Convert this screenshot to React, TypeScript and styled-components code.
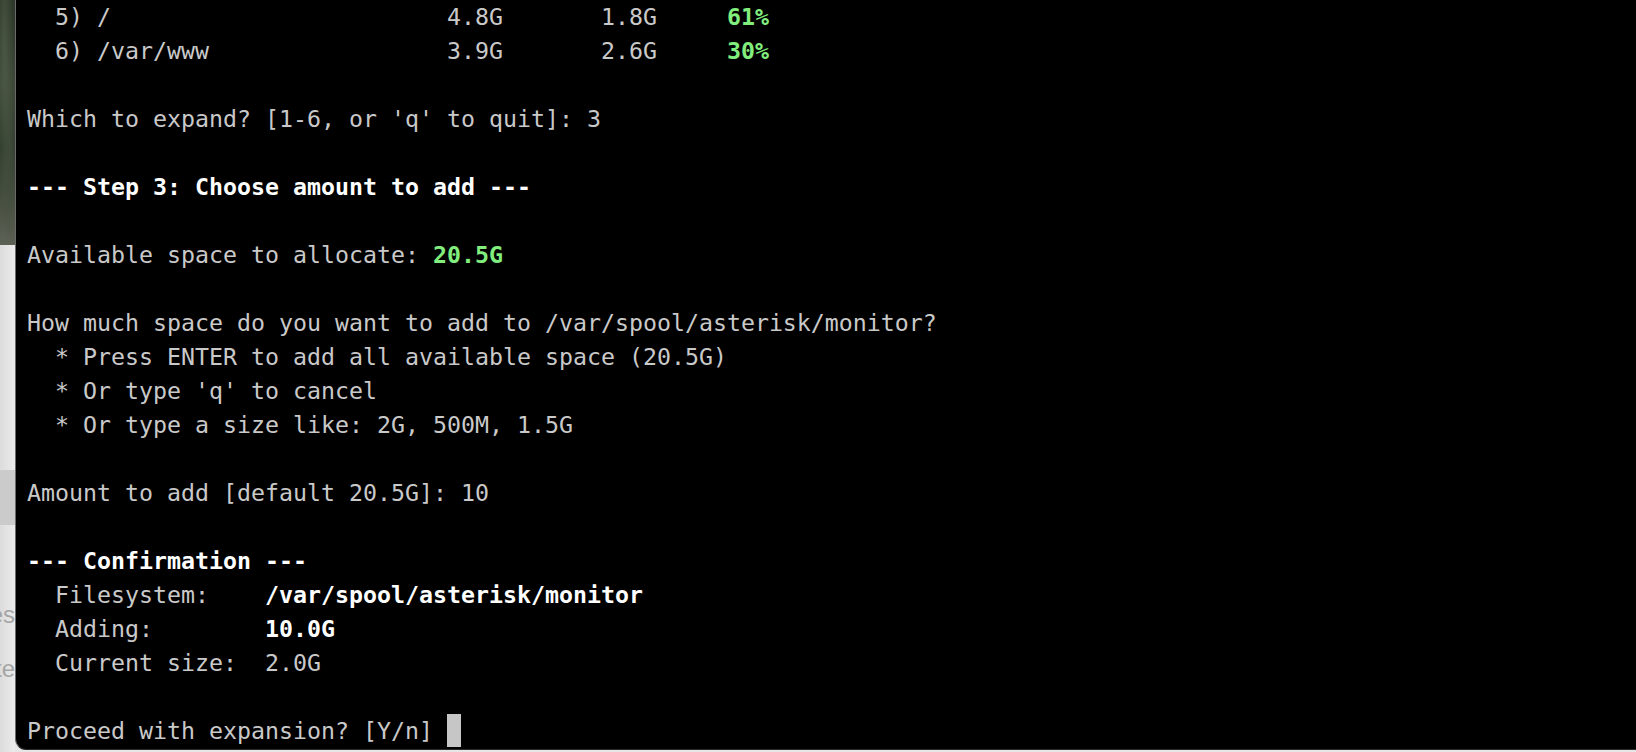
import React from "react";
import styled, { createGlobalStyle } from "styled-components";

const Global = createGlobalStyle`
  html, body {
    margin: 0;
    padding: 0;
    width: 1636px;
    height: 752px;
    overflow: hidden;
    background: #e6e6e6;
  }
  #root {
    width: 1636px;
    height: 752px;
  }
`;

const Screen = styled.div`
  display: flex;
  width: 1636px;
  height: 752px;
  background: #e6e6e6;
`;

const LeftStrip = styled.div`
  width: 15px;
  flex: none;
  display: flex;
  flex-direction: column;
  overflow: hidden;
`;

const Photo = styled.div`
  height: 245px;
  flex: none;
  background:
    radial-gradient(ellipse at 30% 20%, rgba(90, 105, 80, 0.55), transparent 60%),
    radial-gradient(ellipse at 70% 60%, rgba(70, 80, 62, 0.6), transparent 55%),
    linear-gradient(180deg, #2c3629 0%, #3b4737 35%, #2e3a2c 60%, #4a5243 85%, #5d6256 100%);
`;

const GrayArea = styled.div`
  flex: 1;
  display: flex;
  flex-direction: column;
  background: linear-gradient(90deg, #dcdcdc 0%, #ebebeb 100%);
  padding-top: 225px;
`;

const Band = styled.div`
  height: 55px;
  flex: none;
  background: #cbcbcb;
`;

const Fragment = styled.div<{ $top: number }>`
  margin-top: ${(p) => p.$top}px;
  height: 30px;
  line-height: 30px;
  font-family: "Liberation Sans", Arial, sans-serif;
  font-size: 24px;
  color: #a6a6a6;
  white-space: nowrap;
  direction: rtl;
  text-align: right;
`;

const Terminal = styled.div`
  flex: 1;
  height: 750px;
  background: #000;
  border-left: 1px solid #6a6a6a;
  border-bottom: 1px solid #2a2a2a;
  border-bottom-left-radius: 11px;
  box-sizing: border-box;
  padding: 0 0 0 11px;
  overflow: hidden;
  font-family: "DejaVu Sans Mono", "Liberation Mono", monospace;
  font-size: 23.25px;
  color: #c9c9c9;
`;

const Line = styled.div`
  height: 34px;
  line-height: 34px;
  white-space: pre;
`;

const Bold = styled.span`
  font-weight: bold;
  color: #ffffff;
`;

const Green = styled.span`
  font-weight: bold;
  color: #82ee7e;
`;

const Cursor = styled.span`
  display: inline-block;
  width: 14px;
  height: 33px;
  background: #c6c6c6;
  vertical-align: top;
`;

type Row = { n: number; path: string; size: string; free: string; pct: string };

const rows: Row[] = [
  { n: 5, path: "/", size: "4.8G", free: "1.8G", pct: "61%" },
  { n: 6, path: "/var/www", size: "3.9G", free: "2.6G", pct: "30%" },
];

const pad = (s: string, w: number) => s + " ".repeat(Math.max(0, w - s.length));

export default function App() {
  return (
    <>
      <Global />
      <Screen>
        <LeftStrip>
          <Photo />
          <GrayArea>
            <Band />
            <Fragment $top={75}>es</Fragment>
            <Fragment $top={24}>te</Fragment>
          </GrayArea>
        </LeftStrip>
        <Terminal>
          {rows.map((r) => (
            <Line key={r.n}>
              {pad(`  ${r.n}) ${r.path}`, 30)}
              {pad(r.size, 11)}
              {pad(r.free, 9)}
              <Green>{r.pct}</Green>
            </Line>
          ))}
          <Line> </Line>
          <Line>Which to expand? [1-6, or 'q' to quit]: 3</Line>
          <Line> </Line>
          <Line>
            <Bold>--- Step 3: Choose amount to add ---</Bold>
          </Line>
          <Line> </Line>
          <Line>
            Available space to allocate: <Green>20.5G</Green>
          </Line>
          <Line> </Line>
          <Line>How much space do you want to add to /var/spool/asterisk/monitor?</Line>
          <Line>  * Press ENTER to add all available space (20.5G)</Line>
          <Line>  * Or type 'q' to cancel</Line>
          <Line>  * Or type a size like: 2G, 500M, 1.5G</Line>
          <Line> </Line>
          <Line>Amount to add [default 20.5G]: 10</Line>
          <Line> </Line>
          <Line>
            <Bold>--- Confirmation ---</Bold>
          </Line>
          <Line>
            {"  Filesystem:    "}
            <Bold>/var/spool/asterisk/monitor</Bold>
          </Line>
          <Line>
            {"  Adding:        "}
            <Bold>10.0G</Bold>
          </Line>
          <Line>{"  Current size:  2.0G"}</Line>
          <Line> </Line>
          <Line>
            {"Proceed with expansion? [Y/n] "}
            <Cursor />
          </Line>
        </Terminal>
      </Screen>
    </>
  );
}
